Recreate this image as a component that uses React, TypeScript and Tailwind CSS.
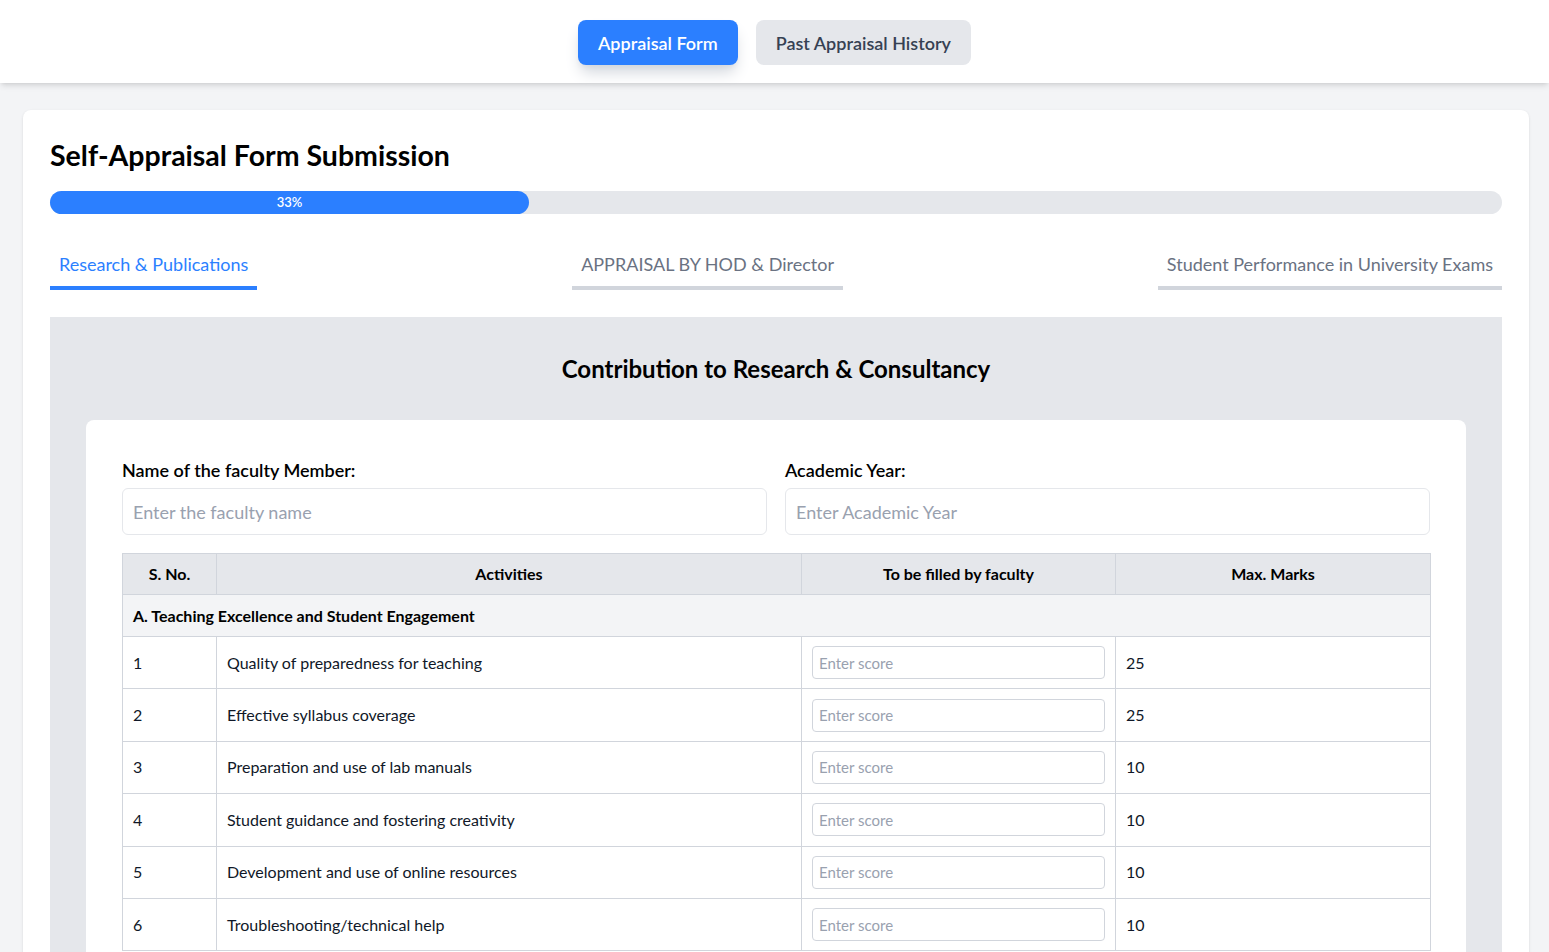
import React from 'react'

const rows = [
  { no: 1, activity: 'Quality of preparedness for teaching', max: 25 },
  { no: 2, activity: 'Effective syllabus coverage', max: 25 },
  { no: 3, activity: 'Preparation and use of lab manuals', max: 10 },
  { no: 4, activity: 'Student guidance and fostering creativity', max: 10 },
  { no: 5, activity: 'Development and use of online resources', max: 10 },
  { no: 6, activity: 'Troubleshooting/technical help', max: 10 },
]

const App = () => {
  return (
    <div className="min-h-screen bg-gray-100 font-['Lato',sans-serif] text-black">
      <header className="bg-white h-[83px] flex items-start pt-5 justify-center gap-[18px] shadow-md">
        <button className="h-[45px] px-5 rounded-lg bg-blue-500 text-white text-lg font-semibold shadow-lg shadow-gray-300">
          Appraisal Form
        </button>
        <button className="h-[45px] px-5 rounded-lg bg-gray-200 text-gray-700 text-lg font-semibold">
          Past Appraisal History
        </button>
      </header>

      <main className="ml-[23px] mr-[20px] mt-[27px] bg-white rounded-lg shadow-sm p-[27px]">
        <h1 className="text-[28.5px] leading-9 font-bold mb-[18px]">Self-Appraisal Form Submission</h1>

        <div className="h-[23px] w-full rounded-full bg-gray-200">
          <div className="h-full w-[33%] rounded-full bg-blue-500 flex items-center justify-center text-[13px] font-semibold text-white">
            33%
          </div>
        </div>

        <div className="mt-6 flex justify-between">
          <button className="px-[9px] pt-3 pb-2 text-lg leading-7 text-blue-500 border-b-4 border-blue-500">
            Research &amp; Publications
          </button>
          <button className="px-[9px] pt-3 pb-2 text-lg leading-7 text-gray-500 border-b-4 border-gray-300">
            APPRAISAL BY HOD &amp; Director
          </button>
          <button className="px-[9px] pt-3 pb-2 text-lg leading-7 text-gray-500 border-b-4 border-gray-300">
            Student Performance in University Exams
          </button>
        </div>

        <section className="mt-[27px] bg-gray-200 px-9 pt-9">
          <h2 className="text-center text-2xl leading-8 font-bold mb-[35px]">
            Contribution to Research &amp; Consultancy
          </h2>

          <div className="bg-white rounded-lg p-9">
            <div className="grid grid-cols-2 gap-[18px]">
              <div>
                <label className="block text-lg leading-7 font-semibold mb-1">Name of the faculty Member:</label>
                <input
                  className="w-full h-[47px] px-[10px] border border-gray-200 rounded-md text-lg placeholder:text-gray-400 outline-none"
                  placeholder="Enter the faculty name"
                />
              </div>
              <div>
                <label className="block text-lg leading-7 font-semibold mb-1">Academic Year:</label>
                <input
                  className="w-full h-[47px] px-[10px] border border-gray-200 rounded-md text-lg placeholder:text-gray-400 outline-none"
                  placeholder="Enter Academic Year"
                />
              </div>
            </div>

            <table className="mt-[18px] w-full table-fixed border-collapse border border-gray-300 text-base text-gray-900">
              <colgroup>
                <col className="w-[94px]" />
                <col className="w-[585px]" />
                <col className="w-[314px]" />
                <col className="w-[315px]" />
              </colgroup>
              <thead>
                <tr className="bg-gray-200 text-black">
                  <th className="border border-gray-300 px-[10px] py-[8px] font-bold">S. No.</th>
                  <th className="border border-gray-300 px-[10px] py-[8px] font-bold">Activities</th>
                  <th className="border border-gray-300 px-[10px] py-[8px] font-bold">To be filled by faculty</th>
                  <th className="border border-gray-300 px-[10px] py-[8px] font-bold">Max. Marks</th>
                </tr>
              </thead>
              <tbody>
                <tr className="bg-gray-100">
                  <td colSpan={4} className="border border-gray-300 px-[10px] py-[8.5px] font-bold text-black">
                    A. Teaching Excellence and Student Engagement
                  </td>
                </tr>
                {rows.map((r) => (
                  <tr key={r.no}>
                    <td className="border border-gray-300 px-[10px] py-[9.2px]">{r.no}</td>
                    <td className="border border-gray-300 px-[10px] py-[9.2px]">{r.activity}</td>
                    <td className="border border-gray-300 px-[10px] py-[9.2px]">
                      <input
                        className="w-full h-[33px] px-[6px] border border-gray-300 rounded text-[15px] placeholder:text-gray-400 outline-none"
                        placeholder="Enter score"
                      />
                    </td>
                    <td className="border border-gray-300 px-[10px] py-[9.2px]">{r.max}</td>
                  </tr>
                ))}
              </tbody>
            </table>
          </div>
        </section>
      </main>
    </div>
  )
}

export default App
